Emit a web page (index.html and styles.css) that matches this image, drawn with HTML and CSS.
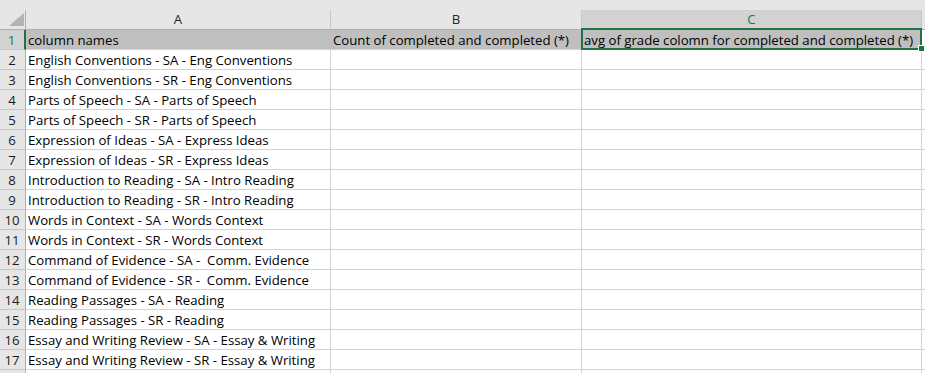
FILE: index.html
```html
<!DOCTYPE html>
<html lang="en">
<head>
    <meta charset="UTF-8">
    <title>Sheet1</title>
    <link rel="stylesheet" href="styles.css">
</head>
<body>
    <div class="sheet">
        <div class="top-band"></div>
        <div class="row head-row">
            <div class="corner">
                <svg width="15" height="13" viewBox="0 0 15 13"><polygon points="15,0 15,13 0,13" fill="#b4b4b4"/></svg>
            </div>
            <div class="col-head">A</div>
            <div class="col-head">B</div>
            <div class="col-head selected">C</div>
            <div class="col-rest"></div>
        </div>
        <div class="row filled">
            <div class="row-head selected">1</div>
            <div class="cell">column names</div>
            <div class="cell">Count of completed and completed (*)</div>
            <div class="cell">avg of grade colomn for completed and completed (*)</div>
            <div class="cell rest"></div>
        </div>
        <div class="row"><div class="row-head">2</div><div class="cell">English Conventions - SA - Eng Conventions</div><div class="cell"></div><div class="cell"></div><div class="cell rest"></div></div>
        <div class="row"><div class="row-head">3</div><div class="cell">English Conventions - SR - Eng Conventions</div><div class="cell"></div><div class="cell"></div><div class="cell rest"></div></div>
        <div class="row"><div class="row-head">4</div><div class="cell">Parts of Speech - SA - Parts of Speech</div><div class="cell"></div><div class="cell"></div><div class="cell rest"></div></div>
        <div class="row"><div class="row-head">5</div><div class="cell">Parts of Speech - SR - Parts of Speech</div><div class="cell"></div><div class="cell"></div><div class="cell rest"></div></div>
        <div class="row"><div class="row-head">6</div><div class="cell">Expression of Ideas - SA - Express Ideas</div><div class="cell"></div><div class="cell"></div><div class="cell rest"></div></div>
        <div class="row"><div class="row-head">7</div><div class="cell">Expression of Ideas - SR - Express Ideas</div><div class="cell"></div><div class="cell"></div><div class="cell rest"></div></div>
        <div class="row"><div class="row-head">8</div><div class="cell">Introduction to Reading - SA - Intro Reading</div><div class="cell"></div><div class="cell"></div><div class="cell rest"></div></div>
        <div class="row"><div class="row-head">9</div><div class="cell">Introduction to Reading - SR - Intro Reading</div><div class="cell"></div><div class="cell"></div><div class="cell rest"></div></div>
        <div class="row"><div class="row-head">10</div><div class="cell">Words in Context - SA - Words Context</div><div class="cell"></div><div class="cell"></div><div class="cell rest"></div></div>
        <div class="row"><div class="row-head">11</div><div class="cell">Words in Context - SR - Words Context</div><div class="cell"></div><div class="cell"></div><div class="cell rest"></div></div>
        <div class="row"><div class="row-head">12</div><div class="cell">Command of Evidence - SA -&nbsp; Comm. Evidence</div><div class="cell"></div><div class="cell"></div><div class="cell rest"></div></div>
        <div class="row"><div class="row-head">13</div><div class="cell">Command of Evidence - SR -&nbsp; Comm. Evidence</div><div class="cell"></div><div class="cell"></div><div class="cell rest"></div></div>
        <div class="row"><div class="row-head">14</div><div class="cell">Reading Passages - SA - Reading</div><div class="cell"></div><div class="cell"></div><div class="cell rest"></div></div>
        <div class="row"><div class="row-head">15</div><div class="cell">Reading Passages - SR - Reading</div><div class="cell"></div><div class="cell"></div><div class="cell rest"></div></div>
        <div class="row"><div class="row-head">16</div><div class="cell">Essay and Writing Review - SA - Essay &amp; Writing</div><div class="cell"></div><div class="cell"></div><div class="cell rest"></div></div>
        <div class="row"><div class="row-head">17</div><div class="cell">Essay and Writing Review - SR - Essay &amp; Writing</div><div class="cell"></div><div class="cell"></div><div class="cell rest"></div></div>
        <div class="row"><div class="row-head"></div><div class="cell"></div><div class="cell"></div><div class="cell"></div><div class="cell rest"></div></div>

        <div class="selection"></div>
        <div class="fill-handle"></div>
    </div>
</body>
</html>
```

FILE: styles.css
```css
body {
    margin: 0;
    font-family: "Open Sans", "Liberation Sans", sans-serif;
    font-size: 13.2px;
    background: #fff;
}
.sheet {
    position: relative;
    width: 925px;
    height: 373px;
    overflow: hidden;
}
.top-band {
    height: 10px;
    background: #e6e6e6;
}
.row {
    display: grid;
    grid-template-columns: 26px 305px 251px 340px 3px;
    height: 20px;
}
.row > div {
    box-sizing: border-box;
    height: 20px;
    border-right: 1px solid #d4d4d4;
    border-bottom: 1px solid #d4d4d4;
    white-space: nowrap;
    overflow: hidden;
}
.head-row > div {
    background: #e6e6e6;
    border-right-color: #c6c6c6;
    border-bottom-color: #aeaeae;
    color: #262626;
    text-align: center;
    line-height: 19px;
}
.head-row .corner {
    display: flex;
    align-items: flex-end;
    justify-content: flex-end;
    padding: 0 1px 3px 0;
    border-right-color: #aeaeae;
}
.head-row .col-head.selected {
    background: #d2d2d2;
    color: #217346;
}
.head-row .col-rest {
    border-right: none;
}
.row .row-head {
    background: #e6e6e6;
    border-right-color: #aeaeae;
    border-bottom-color: #c6c6c6;
    color: #1a1a1a;
    text-align: center;
    line-height: 20px;
    padding-right: 1px;
}
.row .row-head.selected {
    background: #d2d2d2;
    color: #217346;
    border-right: 2px solid #217346;
}
.cell {
    color: #000;
    line-height: 20px;
    padding-left: 2px;
}
.cell.rest {
    border-right: none;
}
.filled .cell {
    background: #bfbfbf;
    border-right-color: #bfbfbf;
}
.filled .cell.rest {
    background: #fff;
}
.selection {
    position: absolute;
    left: 581px;
    top: 28px;
    width: 341px;
    height: 22px;
    box-sizing: border-box;
    border: 2px solid #217346;
}
.fill-handle {
    position: absolute;
    left: 918px;
    top: 45px;
    width: 5px;
    height: 5px;
    background: #217346;
    border: 1px solid #fff;
}
```
